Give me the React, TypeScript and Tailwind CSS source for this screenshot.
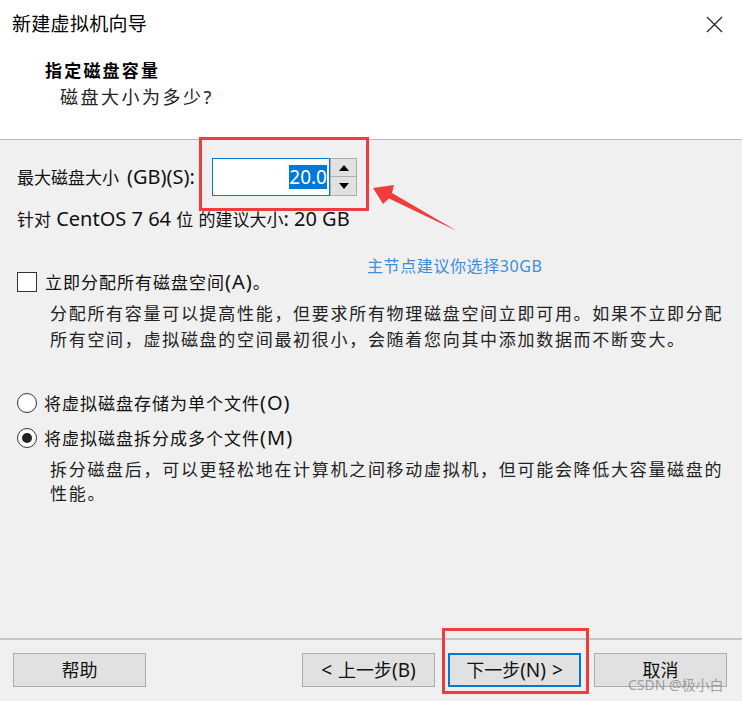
import React from "react";

const F = "font-['Noto_Sans','Noto_Sans_CJK_SC',sans-serif]";

function L({ children }: { children: React.ReactNode }) {
  return <span className="text-[20px]">{children}</span>;
}

function Btn({ children, primary }: { children: React.ReactNode; primary?: boolean }) {
  return (
    <div
      className={`w-[133px] h-[34px] flex items-center justify-center bg-[#e1e1e1] text-[18px] text-[#111] ${
        primary ? "border-2 border-[#0078d7]" : "border border-[#adadad]"
      }`}
    >
      {children}
    </div>
  );
}

export default function App() {
  return (
    <div className={`relative w-[742px] h-[701px] bg-[#f0f0f0] overflow-hidden flex flex-col ${F} text-[#111]`}>
      {/* Header */}
      <div className="bg-white h-[140px] border-b border-[#bcbcbc] shrink-0">
        <div className="h-[48px] flex items-center justify-between pl-[12px] pr-[19px]">
          <span className="text-[19px] tracking-[0.3px] text-black">新建虚拟机向导</span>
          <svg width="17" height="17" viewBox="0 0 17 17">
            <path d="M1 1 L16 16 M16 1 L1 16" stroke="#222" strokeWidth="1.2" fill="none" />
          </svg>
        </div>
        <div className="pl-[45px] mt-[12px] h-[22px] leading-[22px] text-[17px] font-bold tracking-[2.2px] text-black">
          指定磁盘容量
        </div>
        <div className="pl-[60px] mt-[4px] h-[22px] leading-[22px] text-[18px] tracking-[2.5px] text-[#222]">
          磁盘大小为多少?
        </div>
      </div>

      {/* Body */}
      <div className="flex-1 pl-[17px]">
        <div className="mt-[18px] h-[38px] flex items-center">
          <span className="text-[17px] w-[195px] whitespace-nowrap">
            最大磁盘大小<span className="ml-[8px]"><L>(GB)(S):</L></span>
          </span>
          <div className="h-[38px] w-[118px] bg-white border border-[#0078d7] flex items-center justify-end pr-[2px]">
            <span className="bg-[#0078d7] text-white text-[19px] leading-[24px]">20.0</span>
          </div>
          <div className="h-[38px] w-[27px] flex flex-col">
            <div className="h-[19px] bg-[#e1e1e1] border border-[#adadad] flex items-center justify-center">
              <svg width="10" height="6" viewBox="0 0 10 6"><path d="M0 6 L5 0 L10 6 Z" fill="#000" /></svg>
            </div>
            <div className="h-[19px] bg-[#e1e1e1] border border-t-0 border-[#adadad] flex items-center justify-center">
              <svg width="10" height="6" viewBox="0 0 10 6"><path d="M0 0 L5 6 L10 0 Z" fill="#000" /></svg>
            </div>
          </div>
        </div>

        <div className="mt-[12px] h-[22px] leading-[22px] text-[17px] whitespace-nowrap">
          针对<L> CentOS 7 64 </L>位<L> </L>的建议大小<L>: 20 GB</L>
        </div>

        <div className="mt-[41px] h-[22px] flex items-center">
          <div className="w-[20px] h-[20px] bg-white border border-[#333]" />
          <span className="ml-[8px] text-[17px] tracking-[1px] whitespace-nowrap">
            立即分配所有磁盘空间<L>(A)</L>。
          </span>
        </div>

        <div className="mt-[8px] pl-[33px] text-[17px] leading-[26px] tracking-[1.7px] whitespace-nowrap text-[#222]">
          分配所有容量可以提高性能，但要求所有物理磁盘空间立即可用。如果不立即分配
          <br />
          所有空间，虚拟磁盘的空间最初很小，会随着您向其中添加数据而不断变大。
        </div>

        <div className="mt-[39px] h-[22px] flex items-center">
          <div className="w-[20px] h-[20px] rounded-full bg-white border border-[#333]" />
          <span className="ml-[7px] text-[17px] tracking-[1px] whitespace-nowrap">
            将虚拟磁盘存储为单个文件<L>(O)</L>
          </span>
        </div>
        <div className="mt-[13px] h-[22px] flex items-center">
          <div className="w-[20px] h-[20px] rounded-full bg-white border border-[#333] flex items-center justify-center">
            <div className="w-[10px] h-[10px] rounded-full bg-[#222]" />
          </div>
          <span className="ml-[7px] text-[17px] tracking-[1px] whitespace-nowrap">
            将虚拟磁盘拆分成多个文件<L>(M)</L>
          </span>
        </div>

        <div className="mt-[9px] pl-[33px] text-[17px] leading-[24px] tracking-[1.7px] whitespace-nowrap text-[#222]">
          拆分磁盘后，可以更轻松地在计算机之间移动虚拟机，但可能会降低大容量磁盘的
          <br />
          性能。
        </div>
      </div>

      {/* Footer */}
      <div className="shrink-0">
        <div className="h-[2px] bg-[#c8c8c8]" />
        <div className="h-[61px] flex items-start pt-[13px] pl-[13px] pr-[15px]">
          <Btn>帮助</Btn>
          <div className="flex-1" />
          <div className="flex gap-[13px]">
            <Btn>
              <span className="text-[19px]">&lt;</span>
              <span className="ml-[6px]">上一步</span>
              <span className="text-[19px]">(B)</span>
            </Btn>
            <Btn primary>
              <span>下一步</span>
              <span className="text-[19px]">(N)</span>
              <span className="text-[19px] ml-[6px]">&gt;</span>
            </Btn>
            <Btn>取消</Btn>
          </div>
        </div>
      </div>

      {/* Annotations */}
      <div className="absolute left-[199px] top-[137px] w-[170px] h-[74px] border-[3px] border-[#f03c3c]" />
      <div className="absolute left-[442px] top-[628px] w-[147px] h-[66px] border-[3px] border-[#f03c3c]" />
      <svg className="absolute left-[365px] top-[180px]" width="100" height="60" viewBox="0 0 100 60">
        <path d="M8 8 L18 24 L24 18.5 L92 51 L27 13 L29 5 Z" fill="#f03c3c" />
      </svg>
      <div className="absolute left-[367px] top-[254px] text-[16px] tracking-[0.6px] text-[#3c8ce0]">
        主节点建议你选择30GB
      </div>
      <div className="absolute left-[628px] top-[674px] text-[14px] text-[#8a8a8a]/80">CSDN @极小白</div>
    </div>
  );
}
